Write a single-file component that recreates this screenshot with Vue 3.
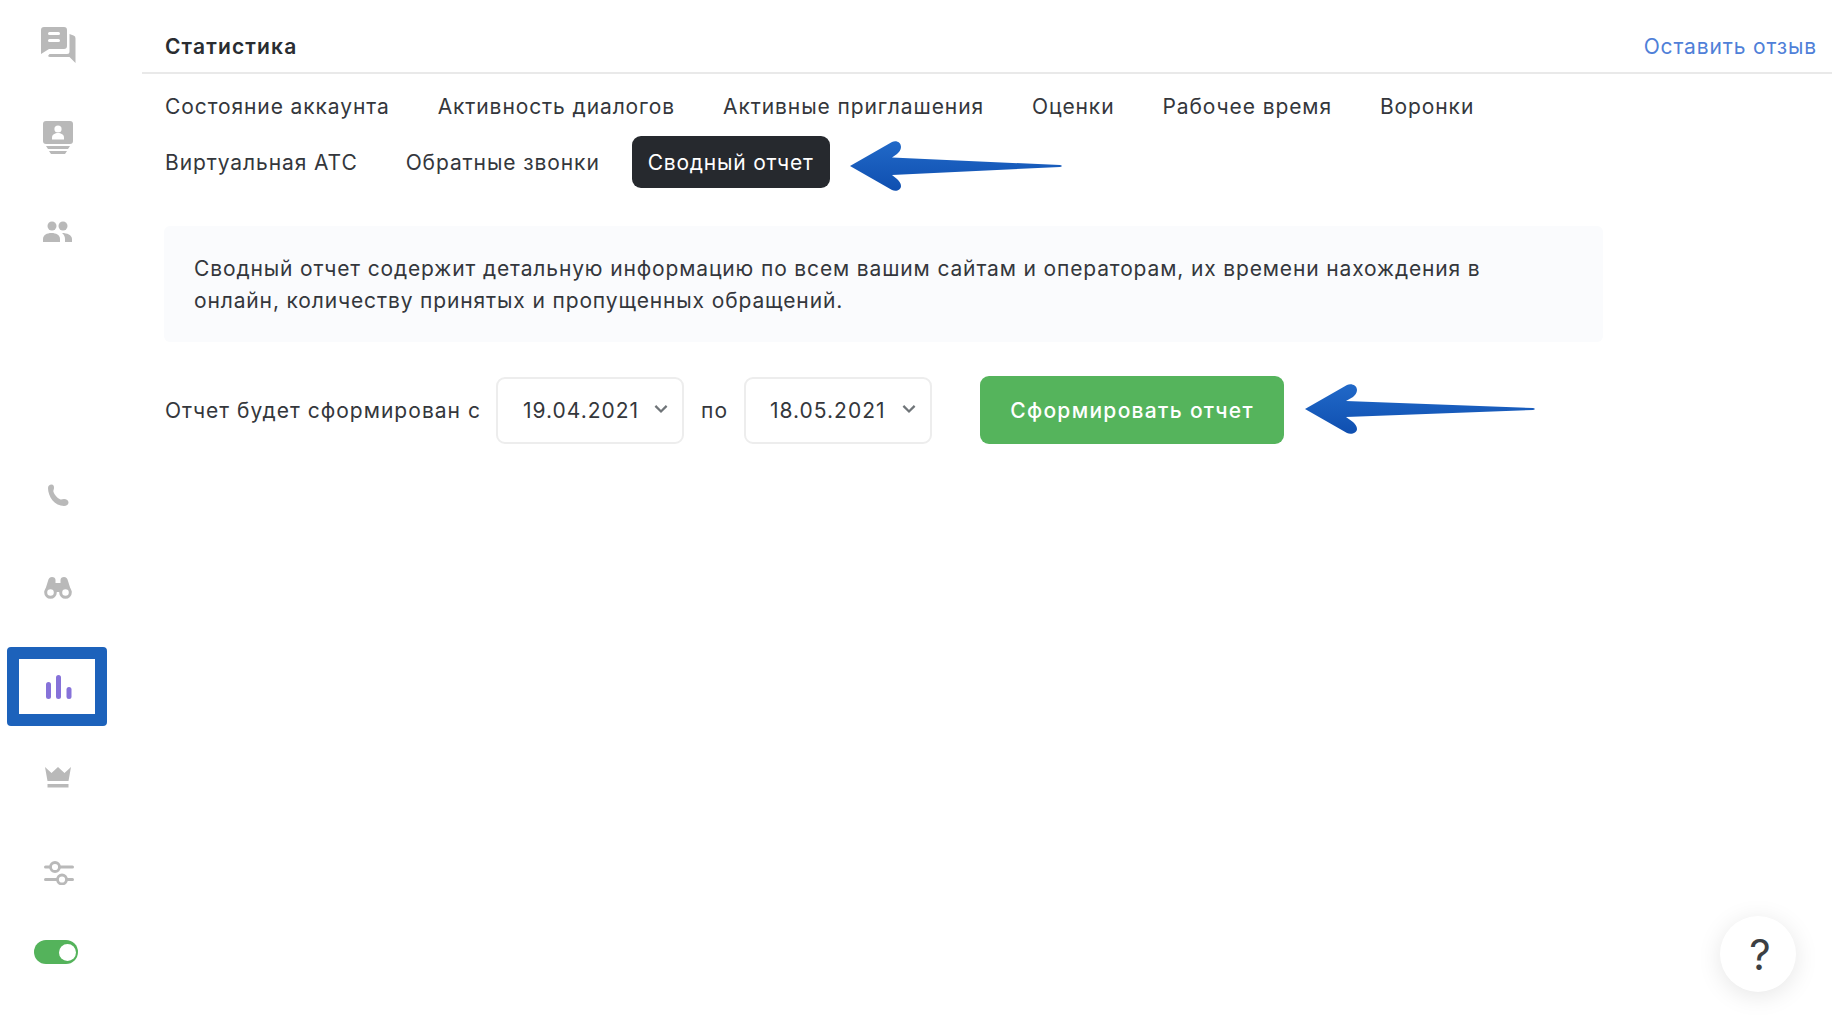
<script setup>
const tabsA = ['Состояние аккаунта', 'Активность диалогов', 'Активные приглашения', 'Оценки', 'Рабочее время', 'Воронки']
const tabsB = ['Виртуальная АТС', 'Обратные звонки']
</script>

<template>
  <div class="page">
    <aside class="side">
      <svg class="ic i-chat" viewBox="0 0 36 36"><path d="M3 0h20a3 3 0 0 1 3 3v16a3 3 0 0 1-3 3H8l-8 5V3a3 3 0 0 1 3-3z" fill="#b9b9b9"/><rect x="7" y="5" width="12" height="3" rx="1.5" fill="#fff"/><rect x="7" y="12" width="12" height="3" rx="1.5" fill="#fff"/><path d="M28.5 7l4 1.500a3 3 0 0 1 2 3V36l-6-6H9a3 3 0 0 1-2-1l1.500-2H26a2.500 2.500 0 0 0 2.500-2.500z" fill="#b9b9b9"/></svg>
      <svg class="ic i-mon" viewBox="0 0 30 36"><path d="M3 0h24a3 3 0 0 1 3 3v17a3 3 0 0 1-3 3H3a3 3 0 0 1-3-3V3a3 3 0 0 1 3-3z" fill="#b9b9b9"/><circle cx="15" cy="8" r="3.600" fill="#fff"/><path d="M9 18.500v-2c0-3 3-4.500 6-4.500s6 1.500 6 4.500v2z" fill="#fff"/><path d="M3 25h24l-2 3H5zM6 30h18l-2 3H8z" fill="#b9b9b9"/></svg>
      <svg class="ic i-users" viewBox="0 0 30 22"><circle cx="9" cy="5" r="4.500" fill="#b9b9b9"/><circle cx="20" cy="5" r="4.500" fill="#b9b9b9"/><path d="M0 21v-3c0-4 4-6 8.500-6S17 14 17 18v3z" fill="#b9b9b9"/><path d="M19 12c5 0 10 2 10 6v3h-7v-3c0-2.500-1-4.500-3-6z" fill="#b9b9b9"/></svg>
      <svg class="ic i-phone" viewBox="0 0 22 23"><path d="M1 4c0-2 1.500-3.500 3.500-3.500S7 2 7 4c0 1.500-1 2.500-.5 4 .8 2.500 3.500 6 6.500 7.300 1.500.6 2.500-.3 4-.3 2.500 0 4.500 1.500 4.500 3.500S19.500 22 17 22C8 22 1 13 1 4z" fill="#b9b9b9"/></svg>
      <svg class="ic i-bino" viewBox="0 0 28 22"><path d="M4 4c.5-2.500 2-4 4-4s3.500 1 3.500 3v3h5V3c0-2 1.500-3 3.500-3s3.500 1.500 4 4l3.500 11H.5z" fill="#b9b9b9"/><circle cx="6.500" cy="15.500" r="4.800" fill="#fff" stroke="#b9b9b9" stroke-width="3"/><circle cx="21.500" cy="15.500" r="4.800" fill="#fff" stroke="#b9b9b9" stroke-width="3"/></svg>
      <div class="active">
        <div class="active-in">
          <svg class="i-bars" viewBox="0 0 26 24"><rect x="0" y="7" width="5" height="17" rx="2.500" fill="#8672d9"/><rect x="10" y="0" width="5" height="24" rx="2.500" fill="#8672d9"/><rect x="20.500" y="12" width="5" height="12" rx="2.500" fill="#8672d9"/></svg>
        </div>
      </div>
      <svg class="ic i-crown" viewBox="0 0 26 21"><path d="M0 0l6.500 6L13 0l6.500 6L26 0l-2.500 14h-21z" fill="#b9b9b9"/><rect x="2.500" y="17" width="21" height="3.500" fill="#b9b9b9"/></svg>
      <svg class="ic i-slide" viewBox="0 0 30 24"><rect x="0" y="4.500" width="30" height="3" rx="1.500" fill="#b9b9b9"/><rect x="0" y="17" width="30" height="3" rx="1.500" fill="#b9b9b9"/><circle cx="11" cy="6" r="4.500" fill="#fff" stroke="#b9b9b9" stroke-width="2.800"/><circle cx="18" cy="18.500" r="4.500" fill="#fff" stroke="#b9b9b9" stroke-width="2.800"/></svg>
      <div class="toggle"><span class="knob"></span></div>
    </aside>

    <main class="main">
      <header class="top">
        <h1 class="title">Статистика</h1>
        <a class="review">Оставить отзыв</a>
      </header>
      <nav class="tabs">
        <div class="tab-row">
          <span v-for="t in tabsA" :key="t" class="tab">{{ t }}</span>
        </div>
        <div class="tab-row second">
          <span v-for="t in tabsB" :key="t" class="tab">{{ t }}</span>
          <span class="pill">Сводный отчет</span>
        </div>
      </nav>
      <div class="info">Сводный отчет содержит детальную информацию по всем вашим сайтам и операторам, их времени нахождения в<br>онлайн, количеству принятых и пропущенных обращений.</div>
      <div class="form">
        <span class="label">Отчет будет сформирован с</span>
        <div class="select"><span>19.04.2021</span><svg class="chev" viewBox="0 0 12 8"><path d="M1.500 1.500L6 6l4.500-4.500" fill="none" stroke="#6f7478" stroke-width="1.800"/></svg></div>
        <span class="label to">по</span>
        <div class="select"><span>18.05.2021</span><svg class="chev" viewBox="0 0 12 8"><path d="M1.500 1.500L6 6l4.500-4.500" fill="none" stroke="#6f7478" stroke-width="1.800"/></svg></div>
        <button class="go">Сформировать отчет</button>
      </div>
    </main>

    <svg class="arrow a1" viewBox="0 0 212 50"><defs><linearGradient id="ag" x1="0" y1="0" x2="0" y2="1"><stop offset="0" stop-color="#2169c8"/><stop offset="1" stop-color="#0f4fb0"/></linearGradient></defs><path d="M0 25L42 1c4-2 9 0 9 5 0 3-2 5-4 7l-5 3.500L210 24c2.500.3 2.500 1.700 0 2L42 34l5 4c2 2 4 4 4 7 0 4-5 6-9 4z" fill="url(#ag)"/></svg>
    <svg class="arrow a2" viewBox="0 0 230 50"><path d="M0 25L42 1c4-2 10 0 10 5 0 3-2 5-4 7l-7 4 187 7c2.500.3 2.500 1.700 0 2L41 33l7 5c2 2 4 4 4 7 0 4-6 6-10 4z" fill="url(#ag)"/></svg>

    <div class="help">?</div>
  </div>
</template>

<style scoped>
.page {
  position: relative;
  display: flex;
  width: 1832px;
  height: 1018px;
  overflow: hidden;
  background: #fff;
  font-family: Inter, "Noto Sans", sans-serif;
  color: #34373c;
}
.side {
  width: 142px;
  flex: none;
  display: flex;
  flex-direction: column;
  align-items: flex-start;
}
.ic { display: block; flex: none; }
.i-chat { width: 36px; height: 36px; margin: 27px 0 0 41px; }
.i-mon { width: 30px; height: 36px; margin-top: 58px; margin-left: 43px; }
.i-users { width: 30px; height: 22px; margin-top: 64px; margin-left: 43px; }
.i-phone { width: 22px; height: 23px; margin-top: 241px; margin-left: 47px; }
.i-bino { width: 28px; height: 22px; margin-top: 70px; margin-left: 44px; }
.active {
  width: 100px;
  height: 79px;
  margin: 48px 0 0 7px;
  box-sizing: border-box;
  border: 12px solid #1d62bb;
  border-radius: 4px;
  display: flex;
  align-items: center;
  justify-content: center;
}
.i-bars { width: 26px; height: 24px; transform: translateX(2px); }
.active-in { display: flex; }
.i-crown { width: 26px; height: 21px; margin-top: 41px; margin-left: 45px; }
.i-slide { width: 30px; height: 24px; margin-top: 73px; margin-left: 44px; }
.toggle {
  width: 44px;
  height: 24px;
  margin: 55px 0 0 34px;
  border-radius: 12px;
  background: #54b35b;
  display: flex;
  align-items: center;
  justify-content: flex-end;
  padding-right: 1px;
  box-sizing: border-box;
}
.knob { width: 17px; height: 17px; border-radius: 50%; background: #fff; margin-right: 1px; }
.main { flex: 1; min-width: 0; }
.top {
  height: 74px;
  box-sizing: border-box;
  border-bottom: 2px solid #e9e9e9;
  display: flex;
  align-items: center;
  justify-content: space-between;
  padding: 20px 15px 0 23px;
}
.title { margin: 0; font-size: 21px; font-weight: 600; letter-spacing: 1.15px; color: #2a2d31; }
.review { font-size: 21px; color: #4f80d8; letter-spacing: 0.85px; }
.tabs { padding: 6px 0 0 23px; }
.tab-row { display: flex; align-items: center; gap: 48px; height: 52px; }
.tab-row.second { height: 52px; margin-top: 4px; }
.tab { font-size: 21px; letter-spacing: 0.9px; white-space: nowrap; }
.pill {
  margin-left: -16px;
  height: 52px;
  padding: 0 16px;
  display: flex;
  align-items: center;
  background: #26292e;
  color: #fff;
  border-radius: 9px;
  font-size: 21px;
  letter-spacing: 0.78px;
}
.info {
  margin: 38px 0 0 22px;
  width: 1439px;
  height: 116px;
  box-sizing: border-box;
  padding: 27px 30px;
  background: #fafbfd;
  border-radius: 6px;
  font-size: 21px;
  line-height: 32px;
  letter-spacing: 0.86px;
  white-space: nowrap;
}
.form { display: flex; align-items: center; margin: 34px 0 0 23px; height: 68px; }
.label { font-size: 21px; letter-spacing: 1.03px; white-space: nowrap; }
.select {
  width: 188px;
  height: 67px;
  margin-left: 15px;
  box-sizing: border-box;
  border: 2px solid #ededed;
  border-radius: 9px;
  display: flex;
  align-items: center;
  padding: 0 13px 0 25px;
  justify-content: space-between;
  font-size: 21px;
  letter-spacing: 1px;
}
.to { margin-left: 17px; }
.to + .select { margin-left: 16px; }
.to + .select > span { margin-left: -1px; }
.chev { width: 16px; height: 10px; margin-bottom: 3px; }
.go {
  width: 304px;
  height: 68px;
  margin-left: 48px;
  border: 0;
  border-radius: 9px;
  background: #55b45c;
  color: #fff;
  font-family: inherit;
  font-size: 21px;
  font-weight: 500;
  letter-spacing: 1.3px;
}
.arrow { position: absolute; }
.a1 { left: 850px; top: 141px; width: 212px; height: 50px; }
.a2 { left: 1305px; top: 384px; width: 230px; height: 50px; }
.help {
  position: absolute;
  left: 1720px;
  top: 916px;
  width: 76px;
  height: 76px;
  padding-left: 4px;
  box-sizing: border-box;
  border-radius: 50%;
  background: #fff;
  box-shadow: 0 4px 24px rgba(0, 0, 0, 0.1);
  display: flex;
  align-items: center;
  justify-content: center;
  font-size: 42px;
  color: #3c3f43;
}
</style>
